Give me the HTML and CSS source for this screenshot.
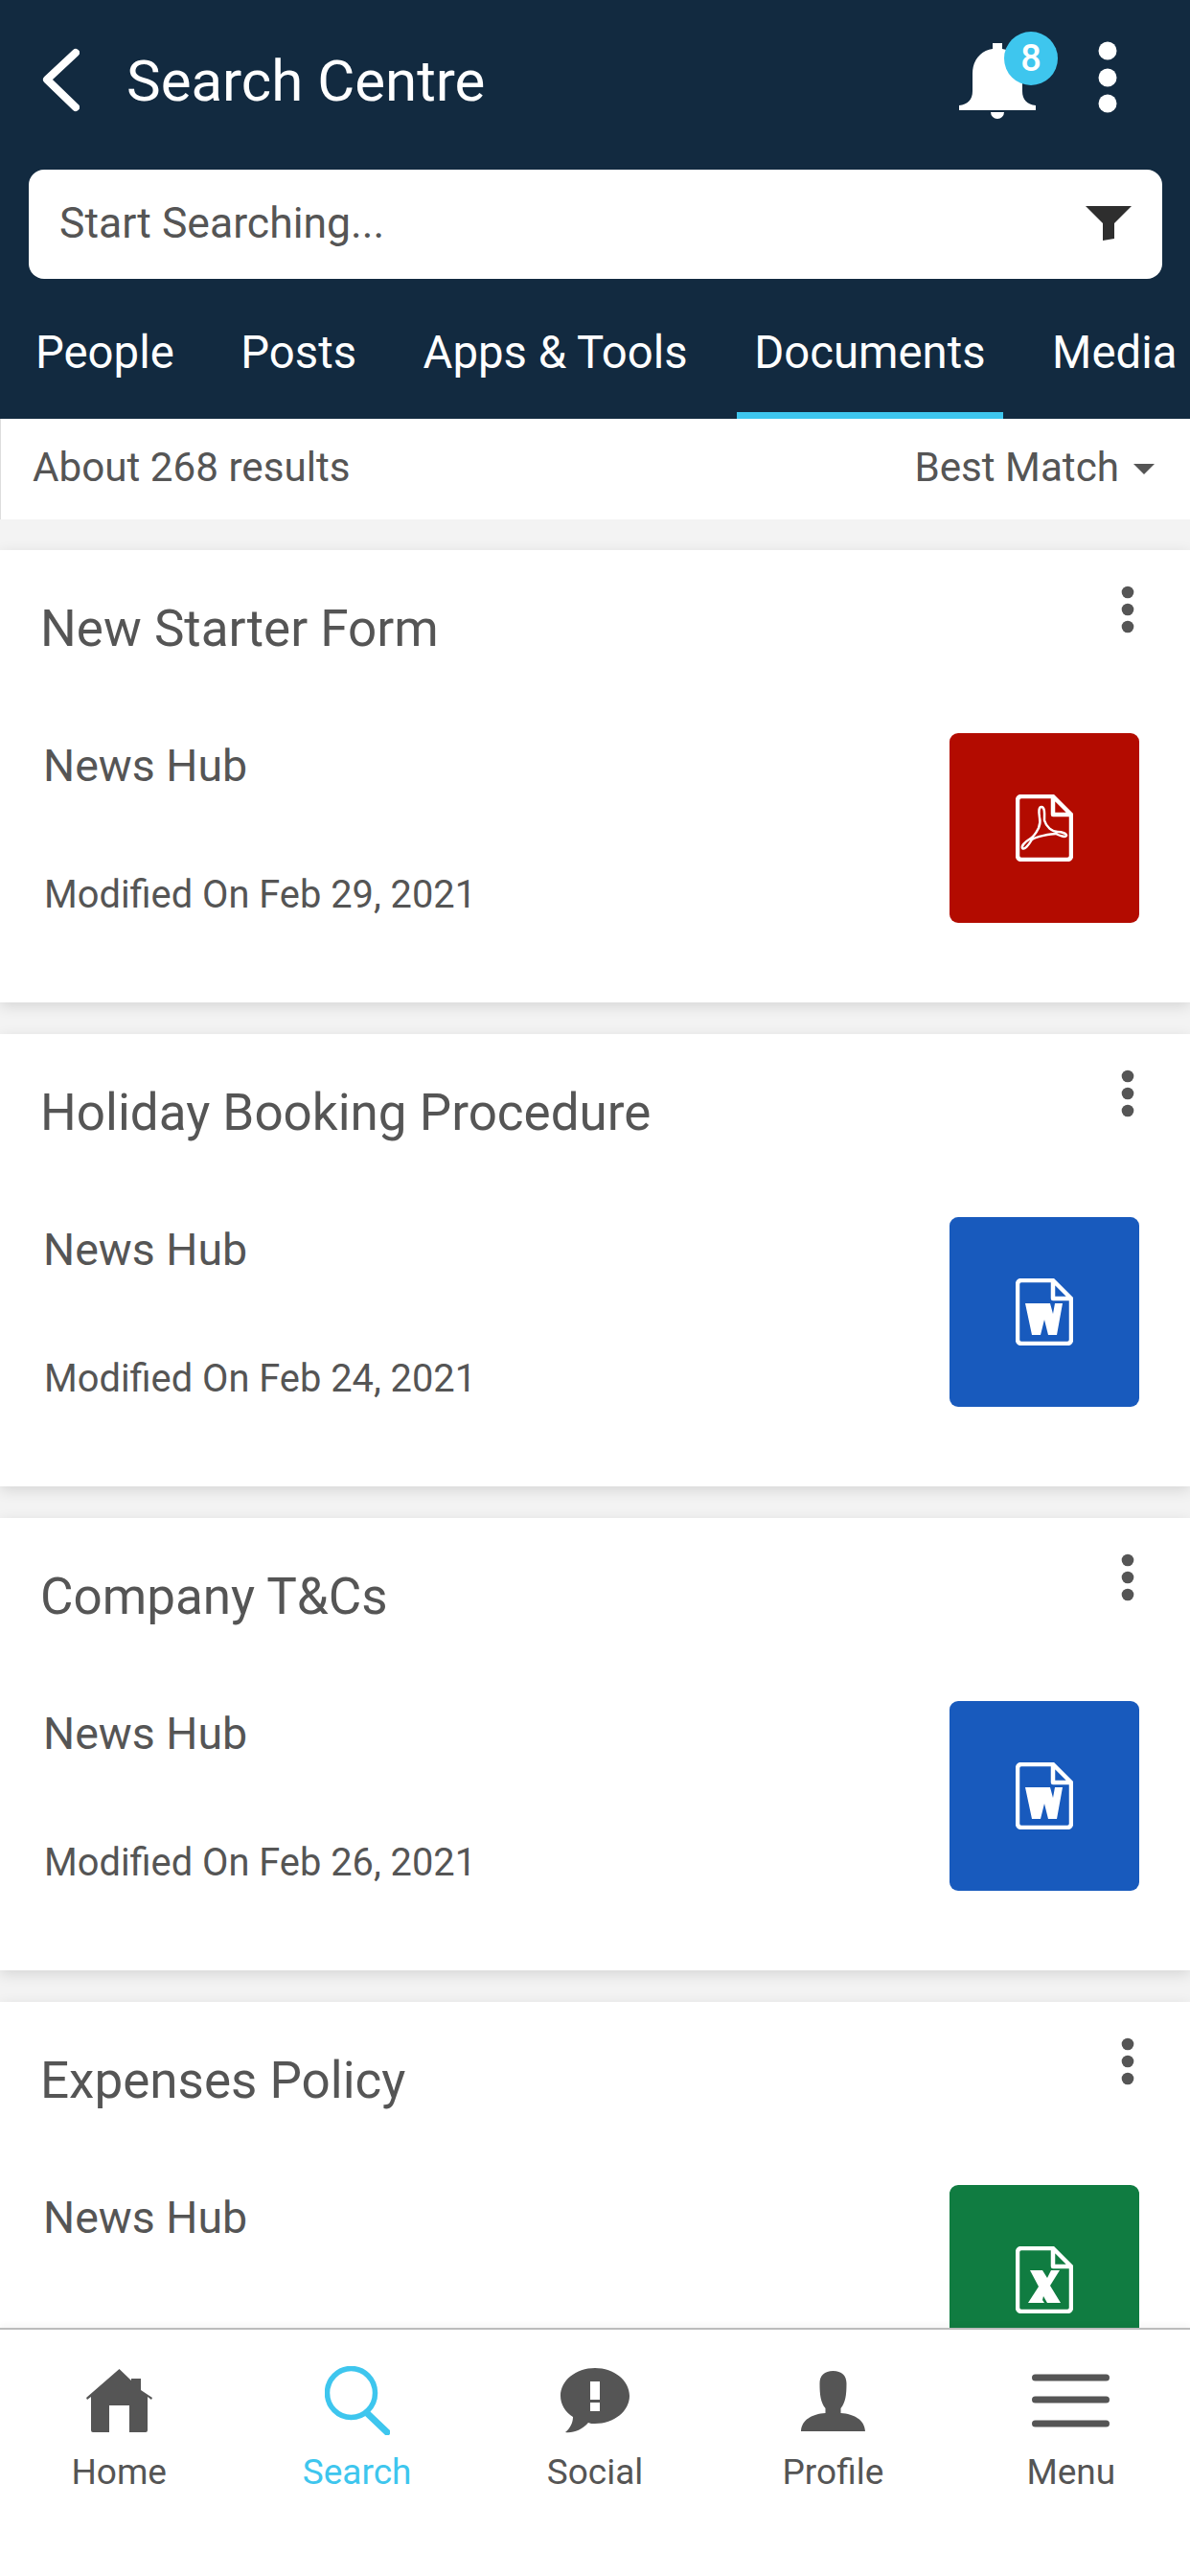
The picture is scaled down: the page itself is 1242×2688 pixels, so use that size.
FILE: index.html
```html
<!DOCTYPE html>
<html>
  <head>
    <link rel="stylesheet" href="styles.css">
  </head>
  <body>
    <div class="app">
      <header class="top">
        <div class="titlebar">
          <svg class="back" width="40" height="70" viewBox="0 0 40 70"><path d="M36 7 6 35l30 29" fill="none" stroke="#fff" stroke-width="8" stroke-linecap="round" stroke-linejoin="round"/></svg>
          <span class="title">Search Centre</span>
          <div class="bell">
            <svg width="80" height="80" viewBox="0 0 80 80"><path d="M35 0h10v6c13 2 21 12 21 26v18c0 9 5 14 14 15v5H0v-5c9-1 14-6 14-15V32C14 18 22 8 35 6zM33 72h14a7 7 0 0 1-14 0z" fill="#fff"/></svg>
            <span class="badge">8</span>
          </div>
          <svg class="kebab" width="20" height="76" viewBox="0 0 20 76"><circle cx="10" cy="10" r="9.5" fill="#fff"/><circle cx="10" cy="38" r="9.5" fill="#fff"/><circle cx="10" cy="65" r="9.5" fill="#fff"/></svg>
        </div>
        <div class="searchbox">
          <span class="placeholder">Start Searching...</span>
          <svg width="48" height="36" viewBox="0 0 48 36"><path d="M0 0h48L30 18v16l-12 2V18z" fill="#2e2e2e"/></svg>
        </div>
        <nav class="tabs">
          <span class="tab">People</span>
          <span class="tab">Posts</span>
          <span class="tab">Apps &amp; Tools</span>
          <span class="tab active">Documents</span>
          <span class="tab">Media</span>
        </nav>
      </header>

      <div class="resultbar">
        <span>About 268 results</span>
        <span class="sort">Best Match <i class="caret"></i></span>
      </div>

      <main class="list">
        <article class="card">
          <div class="cardhead">
            <h2>New Starter Form</h2>
            <svg class="dots" width="14" height="50" viewBox="0 0 14 50"><circle cx="7" cy="7" r="6.3"/><circle cx="7" cy="25" r="6.3"/><circle cx="7" cy="43" r="6.3"/></svg>
          </div>
          <div class="cardbody">
            <div class="meta">
              <div class="source">News Hub</div>
              <div class="date">Modified On Feb 29, 2021</div>
            </div>
            <div class="thumb pdf">
              <svg width="60" height="70" viewBox="0 0 60 70">
                <path class="doc" d="M6 2h33l19 19v43a4 4 0 0 1-4 4H6a4 4 0 0 1-4-4V6a4 4 0 0 1 4-4zM39 2v19h19"/>
                <path d="M27 13C24 13 24 18 25 24 26 28 26 30 24 35 21 41 18 45 14 47 9 50 6 54 7 56 9 58 13 54 17 47 21 44 37 41 42 41 46 43 52 45 53 43 54 41 48 39 44 39 38 39 32 34 30 27 30 22 31 13 27 13Z" fill="none" stroke="#fff" stroke-width="2.5"/>
              </svg>
            </div>
          </div>
        </article>

        <article class="card">
          <div class="cardhead">
            <h2>Holiday Booking Procedure</h2>
            <svg class="dots" width="14" height="50" viewBox="0 0 14 50"><circle cx="7" cy="7" r="6.3"/><circle cx="7" cy="25" r="6.3"/><circle cx="7" cy="43" r="6.3"/></svg>
          </div>
          <div class="cardbody">
            <div class="meta">
              <div class="source">News Hub</div>
              <div class="date">Modified On Feb 24, 2021</div>
            </div>
            <div class="thumb word">
              <svg width="60" height="70" viewBox="0 0 60 70">
                <path class="doc" d="M6 2h33l19 19v43a4 4 0 0 1-4 4H6a4 4 0 0 1-4-4V6a4 4 0 0 1 4-4zM39 2v19h19"/>
                <path d="M10 26H36L39 37 41 26H49L43 59H34L30 43 26 59H17Z" fill="#fff"/>
              </svg>
            </div>
          </div>
        </article>

        <article class="card">
          <div class="cardhead">
            <h2>Company T&amp;Cs</h2>
            <svg class="dots" width="14" height="50" viewBox="0 0 14 50"><circle cx="7" cy="7" r="6.3"/><circle cx="7" cy="25" r="6.3"/><circle cx="7" cy="43" r="6.3"/></svg>
          </div>
          <div class="cardbody">
            <div class="meta">
              <div class="source">News Hub</div>
              <div class="date">Modified On Feb 26, 2021</div>
            </div>
            <div class="thumb word">
              <svg width="60" height="70" viewBox="0 0 60 70">
                <path class="doc" d="M6 2h33l19 19v43a4 4 0 0 1-4 4H6a4 4 0 0 1-4-4V6a4 4 0 0 1 4-4zM39 2v19h19"/>
                <path d="M10 26H36L39 37 41 26H49L43 59H34L30 43 26 59H17Z" fill="#fff"/>
              </svg>
            </div>
          </div>
        </article>

        <article class="card">
          <div class="cardhead">
            <h2>Expenses Policy</h2>
            <svg class="dots" width="14" height="50" viewBox="0 0 14 50"><circle cx="7" cy="7" r="6.3"/><circle cx="7" cy="25" r="6.3"/><circle cx="7" cy="43" r="6.3"/></svg>
          </div>
          <div class="cardbody">
            <div class="meta">
              <div class="source">News Hub</div>
            </div>
            <div class="thumb excel">
              <svg width="60" height="70" viewBox="0 0 60 70">
                <path class="doc" d="M6 2h33l19 19v43a4 4 0 0 1-4 4H6a4 4 0 0 1-4-4V6a4 4 0 0 1 4-4zM39 2v19h19"/>
                <path d="M15 25H28L33 33 37 25H46L36 41 47 59H33L29 52 28 56 30 59H13L24 42Z" fill="#fff"/>
              </svg>
            </div>
          </div>
        </article>
      </main>

      <footer class="bottomnav">
        <div class="navitem">
          <div class="navicon"><svg width="69" height="66" viewBox="0 0 69 66"><path d="M34.5 0 47 12V10H57V22L69 30 68 32 64 29V64A2 2 0 0 1 62 66H45V38H24V66H7A2 2 0 0 1 5 64V29L1 32 0 30Z" fill="#555"/></svg></div>
          <span>Home</span>
        </div>
        <div class="navitem on">
          <div class="navicon"><svg width="68" height="72" viewBox="0 0 68 72"><ellipse cx="27.500" cy="28" rx="25" ry="25.500" fill="none" stroke="#3ec6ee" stroke-width="5.500"/><path d="M44 49 65 69" stroke="#3ec6ee" stroke-width="7" stroke-linecap="round"/></svg></div>
          <span>Search</span>
        </div>
        <div class="navitem">
          <div class="navicon"><svg width="72" height="68" viewBox="0 0 72 68"><path d="M36 0C56 0 72 13 72 29S56 58 36 58C33 58 31 58 29 57 22 65 13 68 5 67 10 63 13 57 13 51 5 46 0 38 0 29 0 13 16 0 36 0Z" fill="#555"/><path d="M31 14H41V33H31ZM31 36H41V45H31Z" fill="#fff"/></svg></div>
          <span>Social</span>
        </div>
        <div class="navitem">
          <div class="navicon"><svg width="67" height="63" viewBox="0 0 67 63"><path d="M33.500 0C42.500 0 47.500 5 47.500 13 47.500 25 46.500 33 41.500 39V44C55.500 45 66.500 51 67 63H0C.5 51 11.500 45 25.500 44V39C20.500 33 19.500 25 19.500 13 19.500 5 24.500 0 33.500 0Z" fill="#555"/></svg></div>
          <span>Profile</span>
        </div>
        <div class="navitem">
          <div class="navicon"><svg width="81" height="56" viewBox="0 0 81 56" stroke="#555" stroke-width="7" stroke-linecap="round"><path d="M3.500 4H77.500M3.500 27H77.500M3.500 52H77.500"/></svg></div>
          <span>Menu</span>
        </div>
      </footer>
    </div>
  </body>
</html>
```

FILE: styles.css
```css
* {
  box-sizing: border-box;
}

body {
  margin: 0;
  font-family: Roboto, "Liberation Sans", sans-serif;
  color: #555;
}

.app {
  width: 1242px;
  height: 2688px;
  display: flex;
  flex-direction: column;
  overflow: hidden;
  background: #f3f3f3;
}

.top {
  height: 437px;
  flex: none;
  background: #122a40;
  color: #fff;
}

.titlebar {
  height: 177px;
  padding: 0 0 15px 43px;
  display: flex;
  align-items: center;
}

.back {
  margin-top: 4px;
  margin-right: 49px;
}

.title {
  font-size: 60px;
  flex: 1;
  margin-top: 6px;
}

.bell {
  position: relative;
  margin-right: 65px;
  margin-top: 8px;
}

.bell svg {
  display: block;
}

.badge {
  position: absolute;
  left: 47px;
  top: -12px;
  width: 56px;
  height: 56px;
  border-radius: 50%;
  background: #3ec6ee;
  color: #fff;
  font-size: 38px;
  font-weight: 500;
  text-align: center;
  line-height: 56px;
}

.kebab {
  margin-right: 76px;
}

.searchbox {
  height: 114px;
  margin: 0 29px 0 30px;
  padding: 0 32px 3px 32px;
  background: #fff;
  border-radius: 16px;
  display: flex;
  align-items: center;
  justify-content: space-between;
  color: #555;
  font-size: 44.5px;
}

.tabs {
  height: 146px;
  display: flex;
  white-space: nowrap;
  font-size: 47.3px;
  padding-left: 19px;
}

.tab {
  padding: 49px 18px 0;
  margin-right: 33.5px;
  height: 146px;
  border-bottom: 7px solid transparent;
}

.tab:last-child {
  margin-right: 0;
}

.tab.active {
  border-bottom-color: #3ec6ee;
}

.resultbar {
  flex: none;
  height: 105px;
  background: #fff;
  border-left: 1px solid #ddd;
  padding: 0 37px 4px 33px;
  display: flex;
  align-items: center;
  justify-content: space-between;
  font-size: 42.2px;
}

.sort {
  display: flex;
  align-items: center;
  gap: 15px;
}

.caret {
  width: 0;
  height: 0;
  margin-top: 4px;
  border-left: 11px solid transparent;
  border-right: 11px solid transparent;
  border-top: 11px solid #555;
}

.list {
  flex: 1;
  min-height: 0;
  overflow: hidden;
  padding-top: 32px;
}

.card {
  height: 472px;
  margin-bottom: 33px;
  background: #fff;
  box-shadow: 0 4px 14px rgba(0, 0, 0, 0.12);
  padding: 0 53px 0 42px;
}

.cardhead {
  height: 191px;
  display: flex;
  justify-content: space-between;
  align-items: flex-start;
}

.cardhead h2 {
  margin: 51px 0 0;
  font-size: 53px;
  font-weight: 400;
  line-height: 62px;
}

.dots {
  fill: #555;
  margin-top: 37px;
  margin-right: 5px;
}

.cardbody {
  display: flex;
  justify-content: space-between;
}

.meta {
  padding-left: 3px;
}

.source {
  font-size: 46.5px;
  line-height: 54px;
  margin-top: 7px;
}

.date {
  font-size: 39.8px;
  line-height: 46px;
  margin-top: 85px;
  padding-left: 1px;
}

.thumb {
  width: 198px;
  height: 198px;
  border-radius: 9px;
  display: flex;
  align-items: center;
  justify-content: center;
}

.doc {
  fill: none;
  stroke: #fff;
  stroke-width: 4.5;
  stroke-linejoin: round;
}

.pdf {
  background: #b30b00;
}

.word {
  background: #185abd;
}

.excel {
  background: #107c41;
}

.bottomnav {
  flex: none;
  height: 259px;
  background: #fff;
  border-top: 2px solid #bcbcbc;
  box-shadow: 0 -3px 6px rgba(0, 0, 0, 0.04);
  position: relative;
  display: grid;
  grid-template-columns: repeat(5, 1fr);
  padding-top: 38px;
}

.navitem {
  display: flex;
  flex-direction: column;
  align-items: center;
  font-size: 37px;
  line-height: 44px;
  color: #555;
}

.navicon {
  height: 72px;
  margin-bottom: 17px;
  display: flex;
  align-items: center;
}

.navicon svg {
  display: block;
}

.navitem.on {
  color: #3ec6ee;
}
```
